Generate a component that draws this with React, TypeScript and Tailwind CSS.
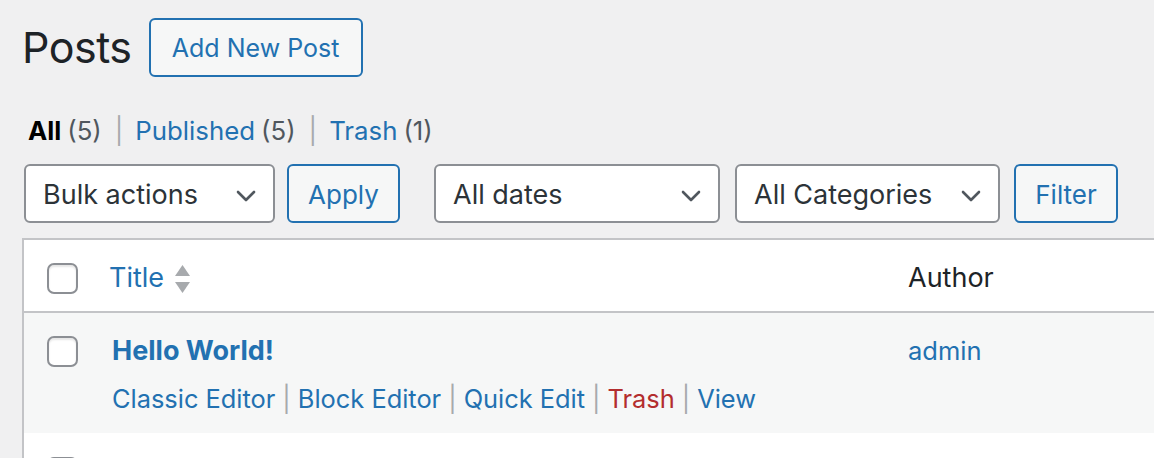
import React from "react";

const Chevron = () => (
  <svg width="22" height="14" viewBox="0 0 22 14" className="shrink-0">
    <path d="M3 3 L11 11 L19 3" fill="none" stroke="#50575e" strokeWidth="2.6" strokeLinecap="round" strokeLinejoin="round" />
  </svg>
);

const Select = ({ label, w }: { label: string; w: string }) => (
  <div className={`${w} h-[59px] flex items-center justify-between pl-[17px] pr-[16px] pt-[4px] bg-white border-2 border-[#8c8f94] rounded-[6px] text-[27px] text-[#2c3338]`}>
    <span>{label}</span>
    <Chevron />
  </div>
);

const Btn = ({ label, w }: { label: string; w: string }) => (
  <div className={`${w} h-[59px] flex items-center justify-center pt-[2px] bg-[#f6f7f7] border-2 border-[#2271b1] rounded-[6px] text-[26px] text-[#2271b1]`}>
    {label}
  </div>
);

const Checkbox = () => (
  <div className="w-[31px] h-[31px] rounded-[7px] border-2 border-[#8c8f94] bg-white shadow-[inset_0_2px_2px_rgba(0,0,0,0.1)] shrink-0" />
);

const Sep = ({ m }: { m: string }) => <span className={`text-[#a7aaad] ${m}`}>|</span>;

export default function App() {
  return (
    <div
      className="w-[1154px] h-[458px] overflow-hidden bg-[#f0f0f1] pl-[22px] text-[#1d2327]"
      style={{ fontFamily: "Inter, 'Liberation Sans', sans-serif" }}
    >
      <div className="flex items-center h-[59px] mt-[18px]">
        <h1 className="text-[43px] leading-none text-[#1d2327] tracking-[-0.5px]">Posts</h1>
        <div className="ml-[17px] w-[214px] h-[59px] flex items-center justify-center pt-[2px] bg-[#f6f7f7] border-2 border-[#2271b1] rounded-[6px] text-[25px] text-[#2271b1]">
          Add New Post
        </div>
      </div>

      <div className="mt-[39px] h-[30px] flex items-center text-[25.8px] ml-[6px]">
        <span className="font-bold text-black">All</span>
        <span className="text-[#50575e] ml-[6px]">(5)</span>
        <Sep m="ml-[13px] mr-[12px]" />
        <span className="text-[#2271b1]">Published</span>
        <span className="text-[#50575e] ml-[6px]">(5)</span>
        <Sep m="ml-[13px] mr-[12px]" />
        <span className="text-[#2271b1]">Trash</span>
        <span className="text-[#50575e] ml-[6px]">(1)</span>
      </div>

      <div className="mt-[18px] flex items-center ml-[2px]">
        <Select label="Bulk actions" w="w-[251px]" />
        <div className="ml-[12px]"><Btn label="Apply" w="w-[113px]" /></div>
        <div className="ml-[34px]"><Select label="All dates" w="w-[286px]" /></div>
        <div className="ml-[15px]"><Select label="All Categories" w="w-[265px]" /></div>
        <div className="ml-[14px]"><Btn label="Filter" w="w-[104px]" /></div>
      </div>

      <div className="mt-[15px] w-[1200px] bg-white border-l-2 border-t-2 border-[#c3c4c7]">
        <div className="h-[73px] flex items-center pt-[6px] border-b-2 border-[#c3c4c7]">
          <div className="w-[85px] pl-[23px] flex items-center"><Checkbox /></div>
          <div className="w-[799px] flex items-center text-[27px] text-[#2271b1]">
            Title
            <svg width="17" height="30" viewBox="0 0 17 30" className="ml-[10px]">
              <path d="M8.5 1 L16 12 L1 12 Z" fill="#a7aaad" />
              <path d="M1 18 L16 18 L8.5 29 Z" fill="#a7aaad" />
            </svg>
          </div>
          <div className="text-[27px] text-[#1d2327]">Author</div>
        </div>

        <div className="h-[120px] bg-[#f6f7f7] flex items-start pt-[23px]">
          <div className="w-[88px] pl-[23px]"><Checkbox /></div>
          <div className="w-[796px] flex flex-col">
            <div className="font-bold text-[27px] text-[#2271b1] leading-[30px]">Hello World!</div>
            <div className="mt-[18px] text-[25.4px] text-[#2271b1] leading-[30px]">
              <span>Classic Editor</span>
              <Sep m="mx-[7px]" />
              <span>Block Editor</span>
              <Sep m="mx-[7px]" />
              <span>Quick Edit</span>
              <Sep m="mx-[7px]" />
              <span className="text-[#b32d2e]">Trash</span>
              <Sep m="mx-[7px]" />
              <span>View</span>
            </div>
          </div>
          <div className="text-[25.5px] text-[#2271b1] leading-[30px]">admin</div>
        </div>

        <div className="h-[119px] bg-white flex items-start pt-[24px]">
          <div className="w-[88px] pl-[23px]"><Checkbox /></div>
          <div className="font-bold text-[27px] text-[#2271b1] leading-[30px]">Sample Post Title Here</div>
        </div>
      </div>
    </div>
  );
}
